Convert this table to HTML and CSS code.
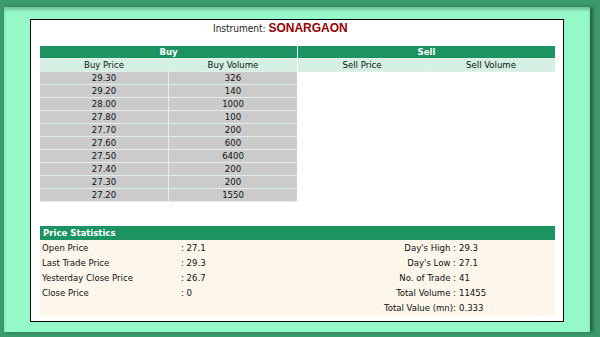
FILE: index.html
```html
<!DOCTYPE html>
<html>
<head>
<meta charset="utf-8">
<link rel="stylesheet" href="styles.css">
</head>
<body>
<div class="frame">
  <div class="panel">
    <div class="title">Instrument: <span class="code">SONARGAON</span></div>
    <div class="books">
      <table class="book">
        <colgroup><col class="half"><col class="half"></colgroup>
        <tr><th colspan="2" class="head">Buy</th></tr>
        <tr class="sub"><td>Buy Price</td><td>Buy Volume</td></tr>
        <tr class="row"><td>29.30</td><td>326</td></tr>
        <tr class="row"><td>29.20</td><td>140</td></tr>
        <tr class="row"><td>28.00</td><td>1000</td></tr>
        <tr class="row"><td>27.80</td><td>100</td></tr>
        <tr class="row"><td>27.70</td><td>200</td></tr>
        <tr class="row"><td>27.60</td><td>600</td></tr>
        <tr class="row"><td>27.50</td><td>6400</td></tr>
        <tr class="row"><td>27.40</td><td>200</td></tr>
        <tr class="row"><td>27.30</td><td>200</td></tr>
        <tr class="row"><td>27.20</td><td>1550</td></tr>
      </table>
      <table class="book">
        <colgroup><col class="half"><col class="half"></colgroup>
        <tr><th colspan="2" class="head">Sell</th></tr>
        <tr class="sub"><td>Sell Price</td><td>Sell Volume</td></tr>
      </table>
    </div>
    <div class="stats">
      <div class="stats-head">Price Statistics</div>
      <div class="stats-body">
        <div class="l-lab">Open Price</div><div class="l-val">: 27.1</div><div class="r-lab">Day's High :</div><div class="r-val">29.3</div>
        <div class="l-lab">Last Trade Price</div><div class="l-val">: 29.3</div><div class="r-lab">Day's Low :</div><div class="r-val">27.1</div>
        <div class="l-lab">Yesterday Close Price</div><div class="l-val">: 26.7</div><div class="r-lab">No. of Trade :</div><div class="r-val">41</div>
        <div class="l-lab">Close Price</div><div class="l-val">: 0</div><div class="r-lab">Total Volume :</div><div class="r-val">11455</div>
        <div class="l-lab"></div><div class="l-val"></div><div class="r-lab">Total Value (mn):</div><div class="r-val">0.333</div>
      </div>
    </div>
  </div>
</div>
</body>
</html>
```

FILE: styles.css
```css
html, body {
  margin: 0;
  padding: 0;
}
body {
  background: #3b996c;
  font-family: "DejaVu Sans Condensed", "DejaVu Sans", sans-serif;
  font-stretch: condensed;
  font-size: 9.5px;
  color: #111;
  width: 600px;
  height: 337px;
  overflow: hidden;
}
.frame {
  margin: 7px 10px 0 4px;
  height: 325px;
  background: #96fac8;
  box-shadow: inset 0 3px 3px rgba(0, 0, 0, 0.22), 3px 0 3px rgba(0, 0, 0, 0.35);
  padding: 12px 0 0 26px;
  box-sizing: border-box;
}
.panel {
  width: 534px;
  height: 303px;
  box-sizing: border-box;
  border: 1px solid #000;
  background: #fff;
  padding: 0 8px 0 9px;
}
.title {
  height: 26px;
  line-height: 16px;
  padding-left: 173px;
  color: #222;
  font-size: 10px;
}
.code {
  font-family: "Liberation Sans", sans-serif;
  font-weight: bold;
  font-size: 12px;
  color: #990000;
}
.books {
  display: flex;
  gap: 1px;
  align-items: flex-start;
}
.book {
  flex: none;
  width: 257px;
  border-collapse: collapse;
  table-layout: fixed;
}
.half {
  width: 50%;
}
.book td, .book th {
  padding: 0;
  height: 12px;
  line-height: 12px;
  text-align: center;
  border-bottom: 1px solid #e3efe8;
}
.book td + td {
  border-left: 1px solid #e3efe8;
}
.head {
  background: #1b9461;
  color: #fff;
  font-weight: bold;
}
.sub td {
  background: #d3f0e3;
}
.row td {
  background: #cbcbcb;
}
.stats {
  margin-top: 24px;
}
.stats-head {
  background: #1b9461;
  color: #fff;
  font-weight: bold;
  height: 14px;
  line-height: 14px;
  padding-left: 3px;
  font-size: 9.5px;
}
.stats-body {
  background: #fdf6ea;
  height: 76px;
  display: grid;
  grid-template-columns: 139px 100px 1fr 99px;
  grid-auto-rows: 15px;
  line-height: 15px;
  padding-left: 2px;
}
.r-lab {
  text-align: right;
}
.r-val {
  padding-left: 3px;
}
```
